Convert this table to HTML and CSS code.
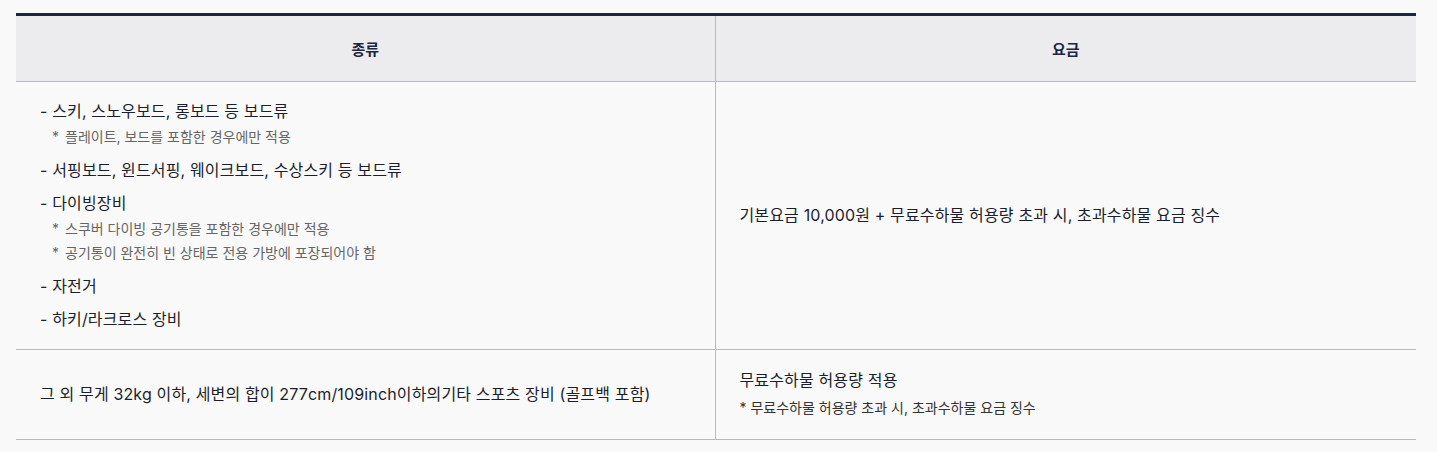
FILE: index.html
```html
<!DOCTYPE html>
<html lang="ko">
<head>
<meta charset="utf-8">
<title>특수수하물 요금</title>
<link rel="stylesheet" href="styles.css">
</head>
<body>
<table class="fee-table">
  <colgroup>
    <col class="kind-col">
    <col>
  </colgroup>
  <thead>
    <tr>
      <th class="col">종류</th>
      <th class="col">요금</th>
    </tr>
  </thead>
  <tbody>
    <tr class="row-main">
      <td class="cell">
        <ul class="items">
          <li class="item">- 스키, 스노우보드, 롱보드 등 보드류
            <ul class="notes">
              <li class="note"><span class="star">*</span>플레이트, 보드를 포함한 경우에만 적용</li>
            </ul>
          </li>
          <li class="item">- 서핑보드, 윈드서핑, 웨이크보드, 수상스키 등 보드류</li>
          <li class="item">- 다이빙장비
            <ul class="notes">
              <li class="note"><span class="star">*</span>스쿠버 다이빙 공기통을 포함한 경우에만 적용</li>
              <li class="note"><span class="star">*</span>공기통이 완전히 빈 상태로 전용 가방에 포장되어야 함</li>
            </ul>
          </li>
          <li class="item">- 자전거</li>
          <li class="item">- 하키/라크로스 장비</li>
        </ul>
      </td>
      <td class="cell">기본요금 10,000원 + 무료수하물 허용량 초과 시, 초과수하물 요금 징수</td>
    </tr>
    <tr class="row-other">
      <td class="cell">그 외 무게 32kg 이하, 세변의 합이 277cm/109inch이하의기타 스포츠 장비 (골프백 포함)</td>
      <td class="cell">
        <p class="fee">무료수하물 허용량 적용</p>
        <p class="fee-note">* 무료수하물 허용량 초과 시, 초과수하물 요금 징수</p>
      </td>
    </tr>
  </tbody>
</table>
</body>
</html>
```

FILE: styles.css
```css
html, body {
  margin: 0;
  padding: 0;
  background: #f9f9f9;
}
body {
  padding: 13px 21px 0 16px;
  font-family: "Inter", "Noto Sans CJK KR", "Noto Sans", sans-serif;
  color: #1b1e2b;
}
.fee-table {
  width: 1400px;
  border-collapse: collapse;
  table-layout: fixed;
  border-top: 3px solid #1c2543;
}
.kind-col {
  width: 699px;
}
.col {
  height: 65px;
  padding: 0;
  background: #ececee;
  font-size: 15px;
  font-weight: 700;
  color: #1c2543;
  text-align: center;
  vertical-align: middle;
  border-bottom: 1px solid #b9b9c2;
}
.col + .col,
.cell + .cell {
  border-left: 1px solid #b9b9c2;
}
.cell {
  padding: 17px 24px 18px;
  font-size: 16px;
  line-height: 24px;
  letter-spacing: 0.15px;
  vertical-align: middle;
  border-bottom: 1px solid #b9b9c2;
}
.items,
.notes {
  list-style: none;
  margin: 0;
  padding: 0;
}
.item + .item {
  margin-top: 9px;
}
.notes {
  margin-top: 2px;
  padding-left: 12px;
}
.note {
  font-size: 14px;
  line-height: 24px;
  letter-spacing: 0;
  color: #666;
}
.star {
  display: inline-block;
  width: 13px;
}
.row-other .cell {
  padding-top: 18px;
  padding-bottom: 19px;
}
.fee {
  margin: 0;
}
.fee-note {
  margin: 4px 0 0;
  font-size: 14px;
  line-height: 24px;
  letter-spacing: 0;
  color: #333;
}
```
